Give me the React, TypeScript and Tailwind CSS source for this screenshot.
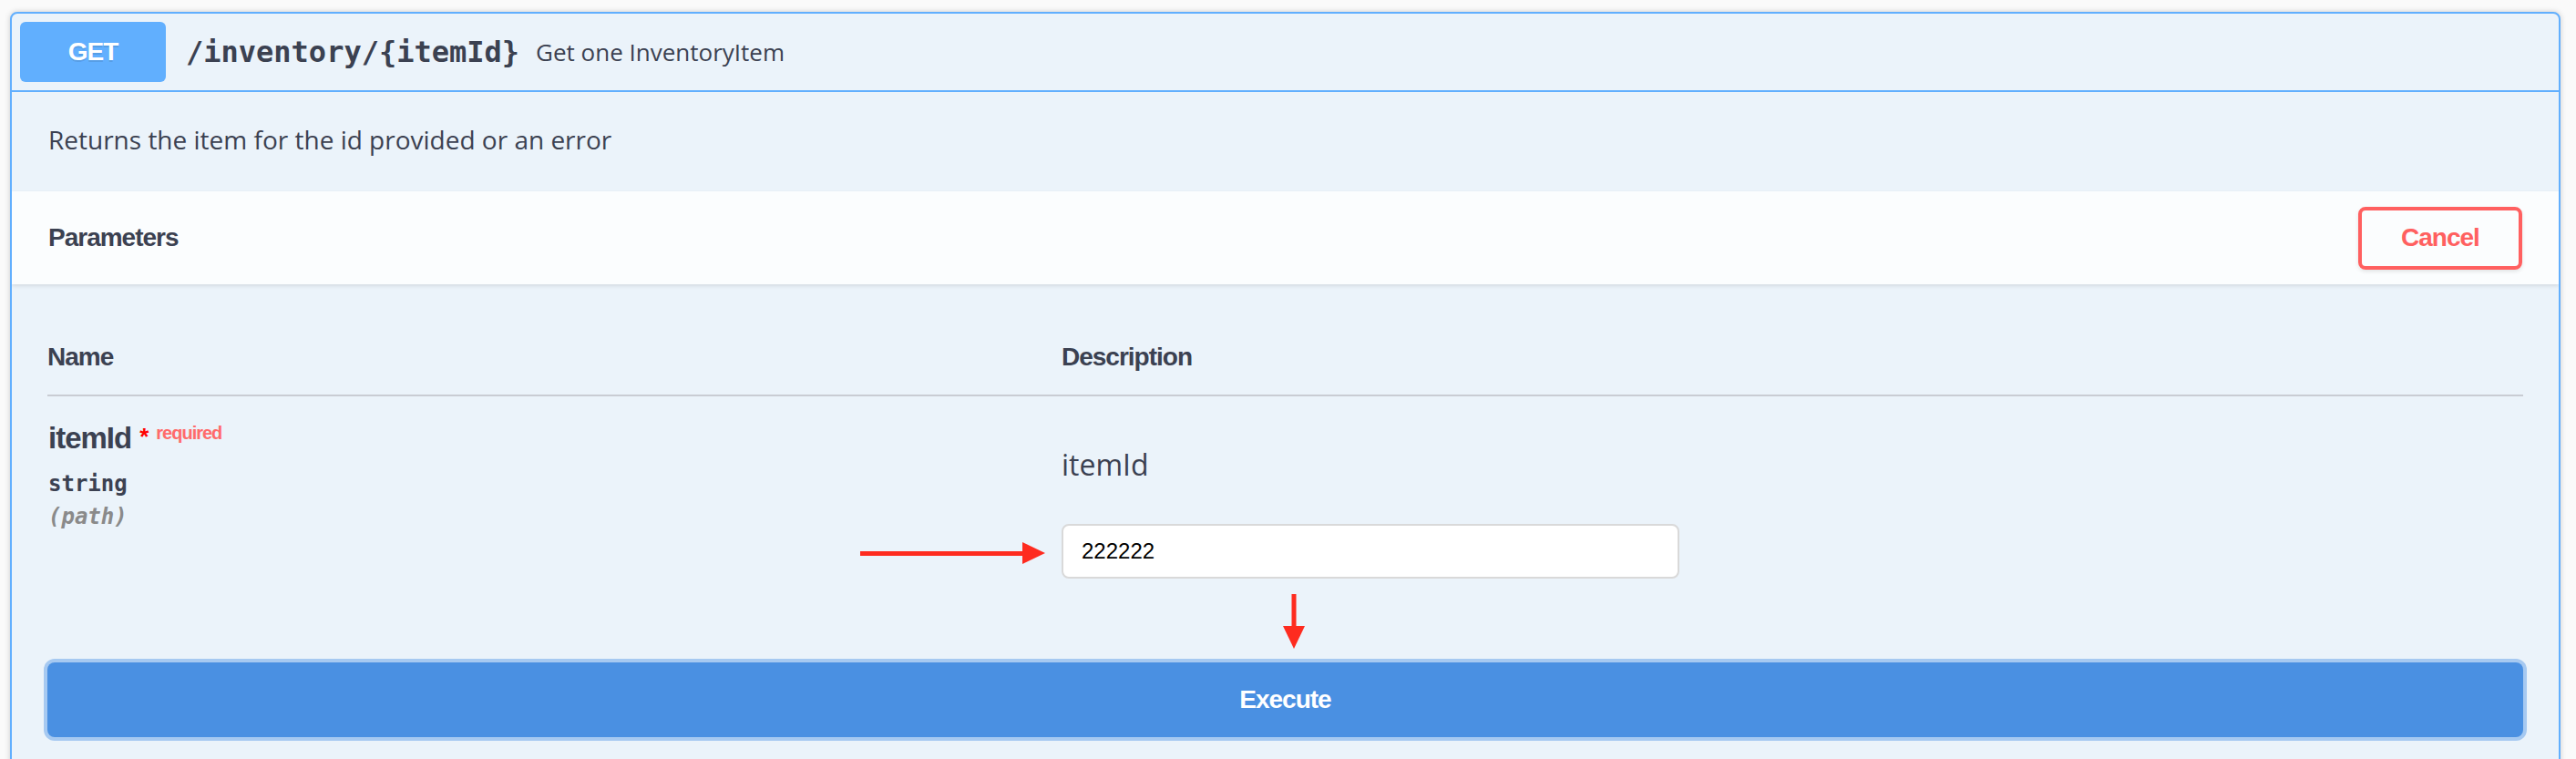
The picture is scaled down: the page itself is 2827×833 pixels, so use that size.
import React from "react";

const head = "font-['Liberation_Sans',Arial,sans-serif] font-bold tracking-[-1px]";
const mono = "font-['DejaVu_Sans_Mono',monospace]";
const body = "font-['Open_Sans',sans-serif]";

function RightArrow() {
  return (
    <svg
      className="absolute left-[931px] top-[283px]"
      width="203"
      height="24"
      viewBox="0 0 203 24"
    >
      <rect x="0" y="10" width="182" height="5" fill="#fe2b1f" />
      <polygon points="178,0 203,12 178,24" fill="#fe2b1f" />
    </svg>
  );
}

function DownArrow() {
  return (
    <svg
      className="absolute left-[1395px] top-[340px]"
      width="24"
      height="60"
      viewBox="0 0 24 60"
    >
      <rect x="9.5" y="0" width="5" height="38" fill="#fe2b1f" />
      <polygon points="0,35 24,35 12,60" fill="#fe2b1f" />
    </svg>
  );
}

export default function App() {
  return (
    <div className="min-h-screen bg-[#fafafa] pt-[13px] pl-[11px] pr-[17px] text-[#3b4151]">
      <div className="rounded-[8px] border-2 border-[#61affe] bg-[#ebf3fa] shadow-[0_0_6px_rgba(0,0,0,0.19)] overflow-hidden">
        {/* summary */}
        <div className="flex items-center px-[9px] py-[9px] border-b-2 border-[#61affe]">
          <div
            className={`${head} tracking-[-1.5px] w-[160px] h-[66px] rounded-[6px] bg-[#61affe] text-white text-[28px] flex items-center justify-center [text-shadow:0_2px_0_rgba(0,0,0,0.1)]`}
          >
            GET
          </div>
          <span className={`${mono} font-bold text-[32px] ml-[22px]`}>
            /inventory/{"{itemId}"}
          </span>
          <span className={`${body} text-[26px] ml-[18px]`}>Get one InventoryItem</span>
        </div>

        {/* description */}
        <div className="h-[109px] flex items-center px-[40px] pb-[5px]">
          <p className={`${body} text-[28px]`}>Returns the item for the id provided or an error</p>
        </div>

        {/* section header */}
        <div className="h-[102px] bg-white/80 shadow-[0_2px_4px_rgba(0,0,0,0.1)] flex items-center justify-between px-[40px]">
          <h4 className={`${head} text-[28px]`}>Parameters</h4>
          <button
            className={`${head} w-[180px] h-[69px] rounded-[8px] border-4 border-[#ff6060] text-[#ff6060] text-[28px] bg-transparent shadow-[0_2px_4px_rgba(0,0,0,0.1)]`}
          >
            Cancel
          </button>
        </div>

        {/* parameters */}
        <div className="relative px-[39px] pb-[60px]">
          <div className="grid grid-cols-[1113px_1fr] h-[123px] items-end pb-[23px] border-b-2 border-[#c9ccd3]">
            <div className={`${head} text-[28px] leading-[36px]`}>Name</div>
            <div className={`${head} text-[28px] leading-[36px]`}>Description</div>
          </div>

          <div className="grid grid-cols-[1113px_1fr]">
            <div className="flex flex-col pt-[26px] pl-[1px]">
              <div className="flex items-start leading-[40px]">
                <span className={`${head} text-[33px]`}>itemId</span>
                <span className={`${head} text-[26px] text-[#ff0000] ml-[9px] leading-[28px] mt-[4px]`}>*</span>
                <span className={`${head} tracking-[-0.8px] text-[20px] text-[#ff6b6b] ml-[9px] leading-[24px] mt-[2px]`}>
                  required
                </span>
              </div>
              <div className={`${mono} font-semibold text-[24px] leading-[32px] mt-[14px]`}>string</div>
              <div className={`${mono} font-semibold italic text-[24px] leading-[32px] mt-[4px] text-[#8a8a8a]`}>
                (path)
              </div>
            </div>

            <div className="flex flex-col pt-[53px]">
              <p className={`${body} text-[32px] leading-[44px]`}>itemId</p>
              <input
                readOnly
                value="222222"
                className="mt-[43px] w-[678px] h-[60px] border-2 border-[#d9d9d9] rounded-[8px] bg-white px-[20px] text-[24px] text-black font-['Liberation_Sans',Arial,sans-serif] outline-none"
              />
            </div>
          </div>

          <button
            className={`${head} tracking-[-0.5px] mt-[92px] w-full h-[82px] rounded-[8px] bg-[#4a90e2] text-white text-[28px] ring-4 ring-[#a6c9f1]`}
          >
            Execute
          </button>

          <RightArrow />
          <DownArrow />
        </div>
      </div>
    </div>
  );
}
